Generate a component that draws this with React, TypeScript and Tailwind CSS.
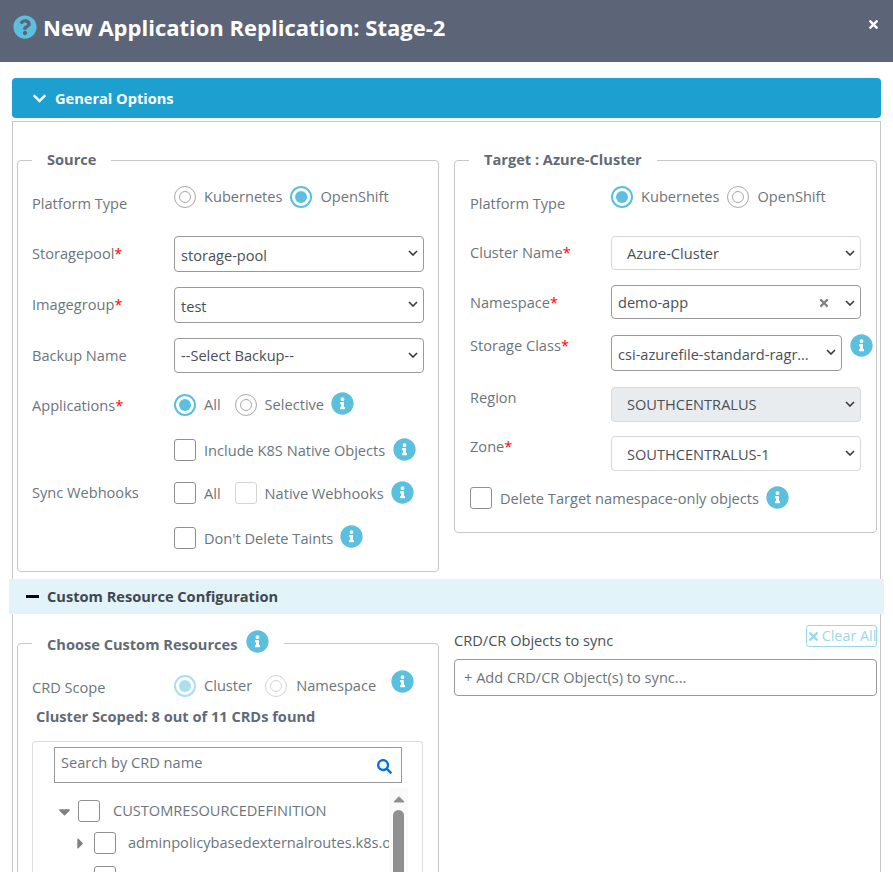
import React from "react";
import { FaInfoCircle, FaQuestionCircle, FaSearch, FaTimes, FaChevronDown, FaCaretDown, FaCaretRight, FaCaretUp } from "react-icons/fa";

const Info = ({ className = "" }: { className?: string }) => (
  <FaInfoCircle size={23} className={"shrink-0 text-[#5bc0de] " + className} />
);

const Req = () => <span className="text-[#ff0000]">*</span>;

const Radio = ({ checked = false, dim = false }: { checked?: boolean; dim?: boolean }) => (
  <span
    className={
      "flex h-[22px] w-[22px] shrink-0 items-center justify-center rounded-full " +
      (checked ? "border-2 border-[#5bc0de] " : "border border-[#a8a8a8] ") +
      (dim ? "opacity-50" : "")
    }
  >
    {checked ? (
      <span className="block h-[12px] w-[12px] rounded-full bg-[#5bc0de]" />
    ) : (
      <span className="block h-[12px] w-[12px] rounded-full border border-[#a8a8a8]" />
    )}
  </span>
);

const Check = ({ light = false }: { light?: boolean }) => (
  <span
    className={
      "block h-[22px] w-[22px] shrink-0 rounded-[3px] border bg-white " +
      (light ? "border-[#d5d5d5]" : "border-[#8f8f8f]")
    }
  />
);

const Chevron = () => (
  <svg width="10" height="6" viewBox="0 0 10 6" fill="none" stroke="#3a3a3a" strokeWidth="1.6">
    <path d="M1 1l4 4 4-4" />
  </svg>
);

const Sel = ({
  value,
  className = "",
  wrap = "w-[250px]",
}: {
  value: string;
  className?: string;
  wrap?: string;
}) => (
  <div className={"relative h-full " + wrap}>
    <select
      defaultValue={value}
      className={
        "block h-full w-full appearance-none rounded-[4px] border text-[14.6px] text-[#495057] outline-none " + className
      }
    >
      <option>{value}</option>
    </select>
    <span className="pointer-events-none absolute right-[6px] top-[14px] flex">
      <Chevron />
    </span>
  </div>
);

const Row = ({
  label,
  children,
  className = "",
  labelClass = "w-[142px]",
}: {
  label?: React.ReactNode;
  children: React.ReactNode;
  className?: string;
  labelClass?: string;
}) => (
  <div className={"flex items-start " + className}>
    <div className={"shrink-0 leading-[20px] " + labelClass}>{label}</div>
    <div className="flex h-full flex-1 items-center">{children}</div>
  </div>
);

const Legend = ({ children, className = "" }: { children: React.ReactNode; className?: string }) => (
  <legend className={"ml-[14px] h-[20px] px-[15px] font-bold leading-[18px] text-[#5f6b78] " + className}>
    {children}
  </legend>
);

const Txt = ({ children, className = "ml-[8px]" }: { children: React.ReactNode; className?: string }) => (
  <span className={"leading-[20px] " + className}>{children}</span>
);

const Tree = () => (
  <div className="flex h-[140px] rounded-t-[4px] border border-b-0 border-[#dcdcdc] pt-[5px]">
    <div className="min-w-0 flex-1 pl-[21px]">
      <div className="flex h-[36px] w-[348px] items-center justify-between border border-[#999] pb-[6px] pl-[6px] pr-[9px] leading-[20px] text-[#6c757d]">
        <span>Search by CRD name</span>
        <FaSearch size={15} className="mt-[8px] text-[#0275d8]" />
      </div>
      <div className="mt-[12px] w-[335px] overflow-hidden">
        <div className="flex h-[32px] items-center whitespace-nowrap pl-[1px]">
          <FaCaretDown size={19} className="mr-[4px] shrink-0 text-[#808080]" />
          <Check />
          <span className="ml-[13px]">CUSTOMRESOURCEDEFINITION</span>
        </div>
        <div className="flex h-[32px] items-center whitespace-nowrap pl-[18px]">
          <FaCaretRight size={17} className="mr-[5px] shrink-0 text-[#808080]" />
          <Check />
          <span className="ml-[12px]">adminpolicybasedexternalroutes.k8s.ovn.org</span>
        </div>
        <div className="flex h-[32px] items-center whitespace-nowrap pl-[18px] pt-[4px]">
          <FaCaretRight size={17} className="mr-[5px] shrink-0 text-[#d0d0d0]" />
          <Check />
        </div>
      </div>
    </div>
    <div className="mr-[14px] mt-[41px] flex w-[19px] shrink-0 flex-col items-center bg-[#fafafa]">
      <FaCaretUp size={18} className="mt-[2px] text-[#909090]" />
      <div className="mt-[2px] h-[70px] w-[11px] rounded-t-[6px] bg-[#909090]" />
    </div>
  </div>
);

export default function App() {
  return (
    <div className="h-[872px] w-[893px] overflow-hidden bg-white font-['Open_Sans',sans-serif] text-[14.6px] text-[#6c757d]">
      <header className="flex h-[62px] items-center justify-between bg-[#5c6478] pl-[13px] pr-[13px] text-white">
        <div className="flex items-center pb-[8px]">
          <FaQuestionCircle size={24} className="text-[#5bc0de]" />
          <h1 className="ml-[6px] text-[22px] font-bold leading-[30px]">New Application Replication: Stage-2</h1>
        </div>
        <FaTimes size={13} className="mb-[14px]" />
      </header>

      <div className="px-[12px] pt-[16px]">
        <div className="flex h-[40px] w-[869px] items-center rounded-[4px] bg-[#1d9fd0] pl-[20px] font-bold text-white">
          <FaChevronDown size={15} />
          <span className="ml-[8px] pt-[2px]">General Options</span>
        </div>

        <div className="mt-[3px] h-[800px] w-[869px] border border-[#c8c8c8]">
          <div className="flex items-start gap-[15px] pl-[4px] pt-[28px]">
            <fieldset className="w-[422px] min-w-0 rounded-[4px] border border-[#c8c8c8] pb-[22px]">
              <Legend>Source</Legend>
              <div className="pl-[14px]">
                <Row label="Platform Type" className="h-[66px]" labelClass="w-[142px] pt-[23px]">
                  <div className="flex items-center self-start pt-[16px]">
                    <Radio />
                    <span className="ml-[8px] -mt-[2px] leading-[20px]">Kubernetes</span>
                    <span className="ml-[8px]"><Radio checked /></span>
                    <span className="ml-[8px] -mt-[2px] leading-[20px]">OpenShift</span>
                  </div>
                </Row>
                <Row label={<>Storagepool<Req /></>} className="mb-[15px] h-[36px]" labelClass="w-[142px] pt-[7px]">
                  <Sel value="storage-pool" className="border-[#999] pl-[6px] pt-[4px]" />
                </Row>
                <Row label={<>Imagegroup<Req /></>} className="mb-[15px] h-[36px]" labelClass="w-[142px] pt-[7px]">
                  <Sel value="test" className="border-[#999] pl-[6px] pt-[4px]" />
                </Row>
                <Row label="Backup Name" className="mb-[21px] h-[35px]" labelClass="w-[142px] pt-[7px]">
                  <Sel value="--Select Backup--" className="border-[#999] pl-[6px] pt-[1px]" />
                </Row>
                <Row label={<>Applications<Req /></>} className="mb-[23px] h-[22px]" labelClass="w-[142px] pt-[1px]">
                  <Radio checked />
                  <span className="ml-[8px]">All</span>
                  <span className="ml-[14px]"><Radio /></span>
                  <span className="ml-[8px]">Selective</span>
                  <Info className="-mt-[3px] ml-[7px]" />
                </Row>
                <Row className="mb-[21px] h-[22px]">
                  <Check />
                  <Txt>Include K8S Native Objects</Txt>
                  <Info className="-mt-[2px] ml-[8px]" />
                </Row>
                <Row label="Sync Webhooks" className="mb-[23px] h-[22px]" labelClass="w-[142px]">
                  <Check />
                  <Txt>All</Txt>
                  <span className="ml-[14px]"><Check light /></span>
                  <Txt>Native Webhooks</Txt>
                  <Info className="-mt-[2px] ml-[7px]" />
                </Row>
                <Row className="h-[22px]">
                  <Check />
                  <Txt>Don't Delete Taints</Txt>
                  <Info className="-mt-[3px] ml-[7px]" />
                </Row>
              </div>
            </fieldset>

            <fieldset className="w-[423px] min-w-0 rounded-[4px] border border-[#c8c8c8] pb-[23px]">
              <Legend>Target : Azure-Cluster</Legend>
              <div className="pl-[15px]">
                <Row label="Platform Type" className="h-[66px]" labelClass="w-[141px] pt-[23px]">
                  <div className="flex items-center self-start pt-[16px]">
                    <Radio checked />
                    <span className="ml-[8px] -mt-[2px] leading-[20px]">Kubernetes</span>
                    <span className="ml-[8px]"><Radio /></span>
                    <span className="ml-[8px] -mt-[2px] leading-[20px]">OpenShift</span>
                  </div>
                </Row>
                <Row label={<>Cluster Name<Req /></>} className="mb-[15px] h-[34px]" labelClass="w-[141px] pt-[6px]">
                  <Sel value="Azure-Cluster" className="border-[#d5d8dc] pl-[15px] pt-[2px]" />
                </Row>
                <Row label={<>Namespace<Req /></>} className="mb-[16px] h-[34px]" labelClass="w-[141px] pt-[7px]">
                  <div className="flex h-full w-[250px] items-center justify-between rounded-[4px] border border-[#999] pl-[6px] pr-[5px] pt-[2px] text-[#495057]">
                    <span>demo-app</span>
                    <span className="flex items-center">
                      <FaTimes size={12} className="mr-[15px] text-[#808080]" />
                      <Chevron />
                    </span>
                  </div>
                </Row>
                <Row label={<>Storage Class<Req /></>} className="mb-[16px] h-[36px]" labelClass="w-[141px]">
                  <Sel value="csi-azurefile-standard-ragr…" wrap="w-[231px]" className="border-[#999] pl-[6px] pt-[4px]" />
                  <Info className="-mt-[15px] ml-[8px]" />
                </Row>
                <Row label="Region" className="mb-[14px] h-[35px]" labelClass="w-[141px]">
                  <Sel value="SOUTHCENTRALUS" className="border-[#d5d8dc] bg-[#e9ecef] pl-[15px]" />
                </Row>
                <Row label={<>Zone<Req /></>} className="mb-[16px] h-[35px]" labelClass="w-[141px]">
                  <Sel value="SOUTHCENTRALUS-1" className="border-[#d5d8dc] pl-[15px] pt-[2px]" />
                </Row>
                <div className="flex h-[22px] items-center">
                  <Check />
                  <Txt>Delete Target namespace-only objects</Txt>
                  <Info className="-mt-[2px] ml-[7px]" />
                </div>
              </div>
            </fieldset>
          </div>

          <div className="-mx-[4px] mt-[7px] flex h-[35px] w-[875px] items-center bg-[#e2f3fa] pl-[17px] font-bold text-[#40474f]">
            <span className="block h-[3px] w-[13px] bg-black" />
            <span className="ml-[8px]">Custom Resource Configuration</span>
          </div>

          <div className="flex items-start gap-[15px] pl-[4px]">
            <fieldset className="mt-[19px] w-[422px] min-w-0 rounded-[4px] border border-[#c8c8c8]">
              <legend className="ml-[14px] flex h-[20px] items-center px-[15px] font-bold text-[#5f6b78]">
                <span className="h-[20px] leading-[22px]">Choose Custom Resources</span>
                <Info className="ml-[9px] -mt-[3px]" />
              </legend>
              <div className="pl-[14px]">
                <Row label="CRD Scope" className="h-[48px]" labelClass="w-[142px] pt-[24px]">
                  <div className="flex items-center self-start pt-[22px]">
                    <Radio checked dim />
                    <span className="ml-[8px] -mt-[2px] leading-[20px]">Cluster</span>
                    <span className="ml-[13px]"><Radio dim /></span>
                    <span className="ml-[9px] -mt-[2px] leading-[20px]">Namespace</span>
                    <Info className="-mt-[10px] ml-[15px]" />
                  </div>
                </Row>
                <div className="pl-[4px] pt-[5px] font-bold leading-[20px] text-[#5f6b78]">
                  Cluster Scoped: 8 out of 11 CRDs found
                </div>
                <div className="mr-[15px] mt-[15px]">
                  <Tree />
                </div>
              </div>
            </fieldset>

            <div className="w-[423px] pt-[11px]">
              <div className="flex h-[34px] items-start justify-between">
                <span className="pt-[5px] leading-[20px] text-[#495057]">CRD/CR Objects to sync</span>
                <span className="flex h-[22px] w-[71px] items-center justify-center whitespace-nowrap rounded-[3px] border border-[#9ad9ea] text-[14.4px] text-[#9ad9ea]">
                  <FaTimes size={13} className="mr-[2px] shrink-0" />
                  Clear All
                </span>
              </div>
              <div className="flex h-[37px] items-center rounded-[4px] border border-[#999] pl-[9px] text-[#6c757d]">
                + Add CRD/CR Object(s) to sync...
              </div>
            </div>
          </div>
        </div>
      </div>
    </div>
  );
}
